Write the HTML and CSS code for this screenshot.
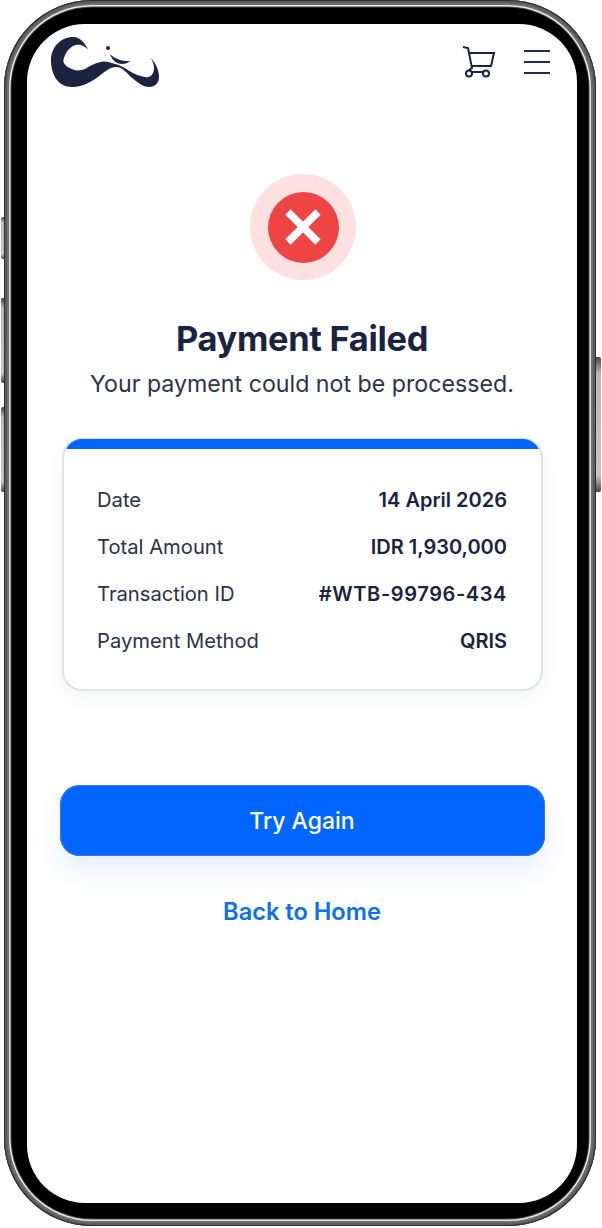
FILE: index.html
```html
<!DOCTYPE html>
<html lang="en">
<head>
    <meta charset="UTF-8">
    <meta name="viewport" content="width=device-width, initial-scale=1.0">
    <title>Payment Failed</title>
    <link rel="stylesheet" href="styles.css">
</head>
<body>
    <div class="phone">
        <!-- Side buttons -->
        <span class="side-btn btn-mute"></span>
        <span class="side-btn btn-up"></span>
        <span class="side-btn btn-down"></span>
        <span class="side-btn btn-power"></span>

        <div class="screen">
            <header class="topbar">
                <svg class="logo" viewBox="50 36 110 54" aria-label="Logo">
                    <path fill="#1a2340" d="M73 37C61 37 51 47 51 60C51 76 59 87 72 87C82 87 91 82 98 77C104 72 110 67 116 67C122 67 126 72 131 77C137 82 143 87 149 87C155 87 159 83 159 77C159 70 156 64 151 58C154 64 155 69 153 73C151 77 148 78 145 77C139 76 135 74 131 72C125 68 120 65 115 64C109 62 105 61 101 62C95 63 90 66 85 69C80 71 74 71 70 68C65 66 62 62 64 58C66 51 71 46 76 45C81 44 85 46 88 50C85 43 80 37 73 37Z"/>
                    <circle fill="#1a2340" cx="108" cy="48" r="2"/>
                    <path fill="#1a2340" d="M110 54C112 60 116 64 122 64C125 64 128 63 131 61C127 61.500 123 61 120 60C116 58.500 112 56.500 110 54Z"/>
                </svg>
                <div class="topbar-icons">
                    <svg class="cart" viewBox="462 46 34 32" fill="none" stroke="#1a2340" stroke-width="2">
                        <path d="M463 47L468 48L472 68L469 70"/>
                        <path d="M468.500 53H494L491 66H471"/>
                        <path d="M472 72H483"/>
                        <circle cx="469" cy="73.500" r="3"/>
                        <circle cx="486" cy="73.500" r="3"/>
                    </svg>
                    <div class="menu">
                        <span></span>
                        <span></span>
                        <span></span>
                    </div>
                </div>
            </header>

            <main class="content">
                <div class="status-ring">
                    <div class="status-dot">
                        <svg class="status-x" viewBox="0 0 36 36" stroke="#ffffff" stroke-width="7.500">
                            <path d="M3 3L33 33M33 3L3 33"/>
                        </svg>
                    </div>
                </div>
                <h1>Payment Failed</h1>
                <p class="subtitle">Your payment could not be processed.</p>

                <div class="card">
                    <div class="card-bar"></div>
                    <div class="card-rows">
                        <div class="row"><span>Date</span><strong>14 April 2026</strong></div>
                        <div class="row"><span>Total Amount</span><strong>IDR 1,930,000</strong></div>
                        <div class="row"><span>Transaction ID</span><strong class="txn-id">#WTB-99796-434</strong></div>
                        <div class="row"><span>Payment Method</span><strong>QRIS</strong></div>
                    </div>
                </div>

                <button class="try-btn">Try Again</button>
                <a class="home-link" href="#">Back to Home</a>
            </main>
        </div>
    </div>
</body>
</html>
```

FILE: styles.css
```css
* {
  box-sizing: border-box;
}

body {
  margin: 0;
  background-color: #fff;
  font-family: "Inter", "Liberation Sans", sans-serif;
  color: #1a2340;
}

.phone {
  position: relative;
  width: 592px;
  height: 1226px;
  margin-left: 4px;
  padding: 24px 19px 23px 23px;
  background-color: #000;
  border-radius: 88px;
  box-shadow:
    inset 0 0 0 1px #2e2e2e,
    inset 0 0 0 3px #5c5c5c,
    inset 0 0 0 5px #6e6e6e,
    inset 0 0 0 6.500px #e8e8e8,
    inset 0 0 0 7.500px #444;
}

.side-btn {
  position: absolute;
  width: 3px;
  background: linear-gradient(180deg, #444, #b8b8b8 12%, #c4c4c4 88%, #444);
}

.btn-mute {
  left: -3px;
  top: 217px;
  height: 42px;
  border-radius: 2px 0 0 2px;
}

.btn-up {
  left: -3px;
  top: 298px;
  height: 85px;
  border-radius: 2px 0 0 2px;
}

.btn-down {
  left: -3px;
  top: 407px;
  height: 85px;
  border-radius: 2px 0 0 2px;
}

.btn-power {
  left: 592px;
  top: 357px;
  height: 135px;
  width: 5px;
  border-radius: 0 2px 2px 0;
}

.screen {
  height: 100%;
  background-color: #fff;
  border-radius: 58px;
  overflow: hidden;
}

.topbar {
  display: flex;
  justify-content: space-between;
  align-items: flex-start;
  padding: 12px 27px 0 23px;
}

.logo {
  width: 110px;
  height: 54px;
}

.topbar-icons {
  display: flex;
  align-items: flex-start;
  gap: 28px;
  margin-top: 10px;
}

.cart {
  width: 34px;
  height: 32px;
}

.menu {
  display: flex;
  flex-direction: column;
  gap: 8.750px;
  width: 26px;
  margin-top: 3.500px;
}

.menu span {
  height: 2.250px;
  background-color: #252c46;
}

.content {
  display: flex;
  flex-direction: column;
  align-items: center;
  padding: 84px 33px 0;
}

.status-ring {
  display: flex;
  align-items: center;
  justify-content: center;
  width: 106px;
  height: 106px;
  margin-left: 2px;
  border-radius: 50%;
  background-color: #fde0e0;
}

.status-dot {
  display: flex;
  align-items: center;
  justify-content: center;
  width: 71px;
  height: 71px;
  border-radius: 50%;
  background-color: #ef4444;
}

.status-x {
  width: 36px;
  height: 36px;
}

h1 {
  margin: 38px 0 0;
  font-size: 34.400px;
  line-height: 42px;
  font-weight: 700;
  letter-spacing: -0.3px;
}

.subtitle {
  margin: 10px 0 0;
  font-size: 23.200px;
  line-height: 28px;
  color: #2b3349;
}

.card {
  width: 481px;
  height: 253px;
  margin: 40px 0 0 1px;
  background-color: #fff;
  border: 2px solid #dfe2e6;
  border-top: 1.500px solid #cfe0fb;
  border-radius: 20px;
  overflow: hidden;
  box-shadow: 0 6px 20px rgba(26, 35, 64, 0.05);
}

.card-bar {
  height: 10px;
  background-color: #0066ff;
}

.card-rows {
  display: flex;
  flex-direction: column;
  gap: 21px;
  padding: 37.500px 34px 0 33px;
}

.row {
  display: flex;
  justify-content: space-between;
  font-size: 20.200px;
  line-height: 26px;
  color: #2b3349;
}

.row strong {
  font-size: 20px;
  font-weight: 600;
  color: #1a2340;
}

.row .txn-id {
  letter-spacing: 0.6px;
}

.try-btn {
  width: 485px;
  height: 71px;
  margin-top: 94px;
  border: none;
  border-radius: 20px;
  background-color: #0066ff;
  color: #fff;
  font-family: inherit;
  font-size: 23px;
  font-weight: 500;
  box-shadow: 0 0 0 1px #3f6ff0 inset, 0 14px 26px rgba(0, 102, 255, 0.1);
  cursor: pointer;
}

.home-link {
  margin-top: 41px;
  font-size: 23.600px;
  line-height: 30px;
  font-weight: 600;
  color: #0b6ff0;
  text-decoration: none;
}
```
